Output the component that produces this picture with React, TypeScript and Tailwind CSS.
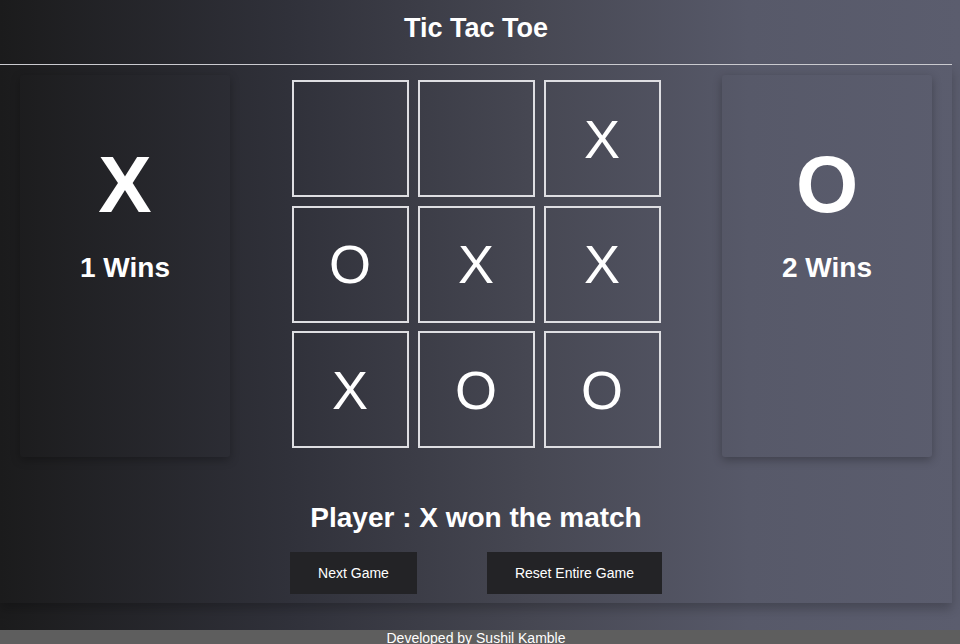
const board = ['', '', 'X', 'O', 'X', 'X', 'X', 'O', 'O'];

function ScoreCard({ mark, wins }: { mark: string; wins: number }) {
  return (
    <div className="mt-[10px] flex h-[382px] w-[210px] flex-col items-center rounded-[3px] pt-[50px] shadow-[0_3px_10px_rgba(0,0,0,0.28)]">
      <div className="text-[80px] font-bold leading-normal">{mark}</div>
      <div className="mt-[2px] text-[28px] font-bold leading-normal">{wins} Wins</div>
    </div>
  );
}

export default function App() {
  return (
    <div
      className="min-h-screen w-full bg-[linear-gradient(to_right,#1b1b1c_0%,#30313a_30%,#464752_55%,#575969_78%,#5b5d6e_100%)] text-white"
      style={{ fontFamily: '"Liberation Sans", Arial, sans-serif' }}
    >
      <div className="w-[952px]">
        {/* Header */}
        <header className="h-[65px] border-b-[1.5px] border-[#cfcfd4] pt-[8px] text-center">
          <h1 className="text-[27px] font-bold leading-normal">Tic Tac Toe</h1>
        </header>

        {/* Game area */}
        <main className="h-[538px] shadow-[0_6px_10px_rgba(0,0,0,0.22)]">
          <div className="flex justify-between px-[20px]">
            <ScoreCard mark="X" wins={1} />

            <div className="mt-[15px] grid grid-cols-[repeat(3,117px)] content-start gap-x-[9px] gap-y-[8.5px] self-start">
              {board.map((cell, i) => (
                <div
                  key={i}
                  className="flex h-[117px] w-[117px] items-center justify-center border-2 border-[#dedee2] text-[54px] leading-none"
                >
                  {cell}
                </div>
              ))}
            </div>

            <ScoreCard mark="O" wins={2} />
          </div>

          <p className="mt-[40px] text-center text-[28px] font-bold leading-normal">Player : X won the match</p>

          <div className="mt-[13px] flex justify-center gap-[70px]">
            <button className="h-[42px] bg-[#232326] px-[28px] text-[14px] text-white">Next Game</button>
            <button className="h-[42px] bg-[#232326] px-[28px] text-[14px] text-white">Reset Entire Game</button>
          </div>
        </main>
      </div>

      {/* Footer */}
      <footer className="mt-[27px] w-full bg-[#5e5e5e] pb-[10px]">
        <div className="w-[952px] text-center text-[14px] leading-[16px]">Developed by Sushil Kamble</div>
      </footer>
    </div>
  );
}
